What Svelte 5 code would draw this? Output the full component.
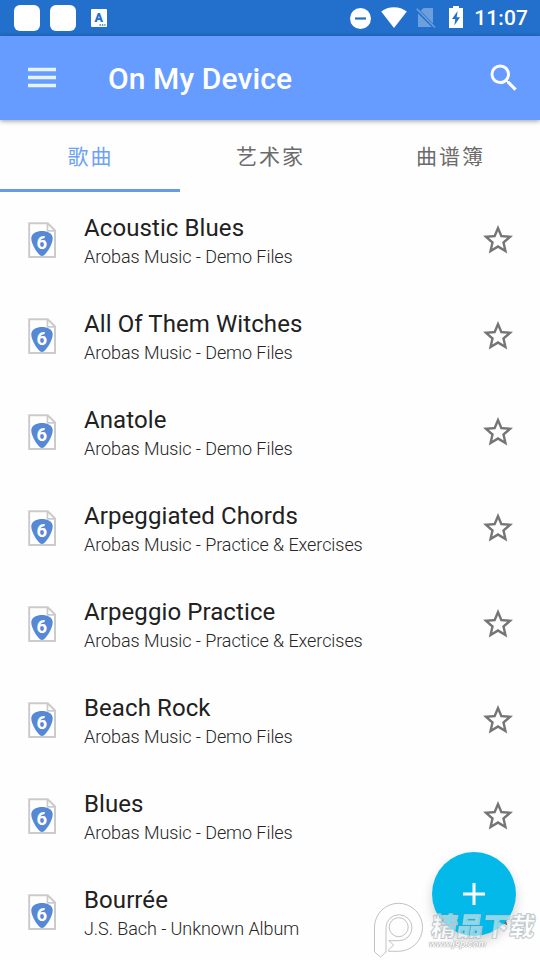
<!--
  On My Device
  ------------
  - Lists the songs stored on the device, with tabs for songs, artists and songbooks.
  - Tapping a star marks the song as a favourite.
-->

<script>
  const tabs = ["歌曲", "艺术家", "曲谱簿"];

  let activeTab = 0;

  let songs = [
    { title: "Acoustic Blues", album: "Arobas Music - Demo Files", starred: false },
    { title: "All Of Them Witches", album: "Arobas Music - Demo Files", starred: false },
    { title: "Anatole", album: "Arobas Music - Demo Files", starred: false },
    { title: "Arpeggiated Chords", album: "Arobas Music - Practice & Exercises", starred: false },
    { title: "Arpeggio Practice", album: "Arobas Music - Practice & Exercises", starred: false },
    { title: "Beach Rock", album: "Arobas Music - Demo Files", starred: false },
    { title: "Blues", album: "Arobas Music - Demo Files", starred: false },
    { title: "Bourrée", album: "J.S. Bach - Unknown Album", starred: false }
  ];

  function toggleStar(index) {
    songs[index].starred = !songs[index].starred;
  }
</script>

<div class="screen">
  <div class="status-bar">
    <span class="app-square"></span>
    <span class="app-square"></span>
    <svg class="keyboard-icon" width="16" height="18" viewBox="0 0 16 18">
      <rect width="16" height="18" rx="1" fill="#fff" />
      <text class="keyboard-letter" x="7.800" y="13" text-anchor="middle">A</text>
      <path d="M8.500 16h6" stroke="#2270cb" stroke-width="1.400" stroke-dasharray="1.400 1" />
    </svg>
    <div class="status-right">
      <svg class="dnd" width="22" height="22" viewBox="0 0 22 22">
        <circle cx="10.500" cy="11.500" r="10.500" fill="#fff" />
        <path d="M5 11.500h11" stroke="#2270cb" stroke-width="2.200" />
      </svg>
      <svg class="wifi" width="26" height="22" viewBox="0 0 26 22">
        <path d="M13 21 .2 4.600C3.800 1.800 8.200.3 13 .3s9.200 1.500 12.800 4.300z" fill="#fff" />
      </svg>
      <svg class="no-sim" width="20" height="22" viewBox="0 0 20 22">
        <path d="M7.500 1H17v15.500L4.600 3.800zM2 6.500 15.700 20H2z" fill="#6d9fdd" />
        <path d="M.7 1.800 19 20.500" stroke="#6d9fdd" stroke-width="1.600" />
      </svg>
      <svg class="battery" width="14" height="22" viewBox="0 0 14 22">
        <path d="M4 0h6v2h4v20H0V2h4z" fill="#fff" />
        <path d="M8.600 5 3 13h3.300l-1 6.500L11 11.200H7.700z" fill="#2270cb" />
      </svg>
      <span class="time">11:07</span>
    </div>
  </div>

  <header class="toolbar">
    <button class="icon-button" aria-label="Menu">
      <svg width="28" height="22" viewBox="0 0 28 22">
        <path d="M0 2.500h28M0 10.500h28M0 18.500h28" stroke="#e6f3ff" stroke-width="3.400" />
      </svg>
    </button>
    <h1>On My Device</h1>
    <button class="icon-button" aria-label="Search">
      <svg width="36" height="36" viewBox="0 0 24 24">
        <path
          fill="#fff"
          d="M15.500 14h-.79l-.28-.27A6.471 6.471 0 0 0 16 9.500 6.500 6.500 0 1 0 9.500 16c1.610 0 3.090-.59 4.230-1.570l.27.28v.79l5 4.990L20.490 19l-4.990-5zm-6 0C7.010 14 5 11.990 5 9.500S7.010 5 9.500 5 14 7.010 14 9.500 11.990 14 9.500 14z"
        />
      </svg>
    </button>
  </header>

  <nav class="tabs">
    {#each tabs as tab, i}
      <button class="tab" class:active={activeTab === i} on:click={() => (activeTab = i)}>
        {tab}
      </button>
    {/each}
  </nav>

  <ul class="song-list">
    {#each songs as song, i (song.title)}
      <li class="song">
        <svg class="file-icon" width="28" height="36" viewBox="0 0 28 36">
          <path d="M1.200 1.200h18.500L27 8.500V35H1.200z" fill="#fff" stroke="#cbcbcb" stroke-width="2" />
          <path d="M19.500 1v7.800H27" fill="none" stroke="#cbcbcb" stroke-width="1.800" />
          <path
            d="M14 9c5.200 0 10.700 2.300 10.700 7.200 0 5.600-4.800 13.300-8.400 16.800-1.500 1.400-3.100 1.400-4.600 0C8.100 29.500 3.300 21.800 3.300 16.200 3.300 11.300 8.800 9 14 9z"
            fill="#5788d6"
          />
          <text class="file-version" x="13.800" y="26.500" text-anchor="middle">6</text>
        </svg>
        <div class="song-text">
          <div class="song-title">{song.title}</div>
          <div class="song-album">{song.album}</div>
        </div>
        <button class="icon-button" aria-label="Favourite" on:click={() => toggleStar(i)}>
          <svg width="36" height="36" viewBox="0 0 24 24">
            {#if song.starred}
              <path fill="#757575" d="M12 17.270 18.180 21l-1.640-7.030L22 9.240l-7.190-.61L12 2 9.190 8.630 2 9.240l5.460 4.730L5.820 21z" />
            {:else}
              <path
                fill="#757575"
                d="m22 9.240-7.190-.62L12 2 9.190 8.630 2 9.240l5.460 4.730L5.820 21 12 17.270 18.180 21l-1.630-7.030L22 9.240zM12 15.400l-3.760 2.270 1-4.280-3.320-2.880 4.380-.38L12 6.100l1.710 4.040 4.380.38-3.320 2.880 1 4.280L12 15.400z"
              />
            {/if}
          </svg>
        </button>
      </li>
    {/each}
  </ul>

  <button class="fab" aria-label="Add">
    <svg width="22" height="22" viewBox="0 0 22 22">
      <path d="M11 0v22M0 11h22" stroke="#fff" stroke-width="3" />
    </svg>
  </button>

  <div class="watermark">
    <svg width="52" height="58" viewBox="0 0 52 58">
      <path
        class="mark"
        d="M1.500 50V25a24 24 0 1 1 24 24.300h-9.800v-1.600l5-4.700-5-4.300h10a13 13 0 1 0-12.700-13V50l-5.500 5z"
      />
      <circle class="mark" cx="25.700" cy="25.200" r="9.500" />
    </svg>
    <div class="watermark-text">
      <span class="watermark-name">精品下载</span>
      <span class="watermark-url">www.j9p.com</span>
    </div>
  </div>
</div>

<style>
  :global(body) {
    background: #fff;
    overflow: hidden;
  }

  .screen {
    position: relative;
    width: 540px;
    height: 960px;
    overflow: hidden;
    background: #fefefe;
    font-family: Roboto, "Noto Sans CJK SC", sans-serif;
  }

  button {
    padding: 0;
    border: none;
    background: none;
    font-family: inherit;
    cursor: pointer;
  }

  svg {
    display: block;
  }

  .status-bar {
    display: flex;
    align-items: center;
    box-sizing: border-box;
    height: 36px;
    padding: 0 12px 0 14px;
    gap: 10px;
    background: #2270cb;
  }

  .app-square {
    width: 26px;
    height: 26px;
    border-radius: 6px;
    background: #fff;
  }

  .keyboard-icon {
    margin-left: 5px;
  }

  .keyboard-letter {
    fill: #2270cb;
    font-size: 12.5px;
    font-weight: 900;
  }

  .status-right {
    display: flex;
    align-items: center;
    margin-left: auto;
  }

  .wifi {
    margin-left: 9px;
  }

  .no-sim {
    margin-left: 9px;
  }

  .battery {
    margin: 0 11px 2px 13px;
  }

  .time {
    color: #fff;
    font-size: 21px;
    font-weight: 500;
    letter-spacing: 0.1px;
    line-height: 36px;
  }

  .toolbar {
    position: relative;
    display: flex;
    align-items: center;
    box-sizing: border-box;
    height: 84px;
    padding: 0 18px 0 28px;
    background: #669cff;
    box-shadow: 0 1px 5px rgba(0, 0, 0, 0.4);
  }

  h1 {
    flex: 1;
    margin: 1px 0 0 52px;
    color: #fff;
    font-size: 30px;
    font-weight: 500;
    letter-spacing: 0.1px;
  }

  .tabs {
    display: flex;
    height: 72px;
  }

  .tab {
    flex: 1;
    padding: 1px 0 0 1px;
    border-bottom: 3px solid transparent;
    color: #6b6b6b;
    font-size: 21px;
    letter-spacing: 2px;
  }

  .tab.active {
    border-color: #669be8;
    color: #6ea2f5;
  }

  .song-list {
    margin: 0;
    padding: 0;
    list-style: none;
  }

  .song {
    display: flex;
    align-items: center;
    box-sizing: border-box;
    height: 96px;
    padding: 0 24px 0 28px;
  }

  .file-version {
    fill: #fff;
    font-size: 18.5px;
    font-weight: 700;
  }

  .song-text {
    flex: 1;
    margin-left: 28px;
    padding-top: 3px;
  }

  .song-title {
    color: #212121;
    font-size: 24px;
    letter-spacing: 0.09px;
    line-height: 30px;
  }

  .song-album {
    margin-top: 1px;
    color: #262626;
    font-size: 18px;
    font-weight: 300;
    letter-spacing: -0.07px;
    line-height: 26px;
  }

  .fab {
    position: absolute;
    right: 24px;
    bottom: 24px;
    display: flex;
    align-items: center;
    justify-content: center;
    width: 84px;
    height: 84px;
    border-radius: 50%;
    background: #03b9e9;
    box-shadow: 0 6px 12px rgba(0, 0, 0, 0.18);
  }

  .watermark {
    position: absolute;
    left: 373px;
    top: 902px;
    display: flex;
    pointer-events: none;
  }

  .mark {
    fill: none;
    stroke: #c2c2c2;
    stroke-width: 1;
  }

  .watermark-text {
    display: flex;
    flex-direction: column;
    margin-left: 4px;
    font-family: "Liberation Sans", "Noto Sans CJK SC", sans-serif;
    white-space: nowrap;
  }

  .watermark-name {
    margin-top: 12px;
    color: rgba(255, 255, 255, 0.5);
    font-size: 26px;
    font-style: oblique;
    font-weight: 900;
    line-height: 26px;
    transform: skewX(6deg);
    -webkit-text-stroke: 0.9px #bcc6c9;
  }

  .watermark-url {
    margin-top: -1px;
    color: #fff;
    font-size: 9px;
    font-style: italic;
    font-weight: bold;
    line-height: 10px;
    text-shadow: 0 0 1px #888, 0 0 1px #999;
  }
</style>
